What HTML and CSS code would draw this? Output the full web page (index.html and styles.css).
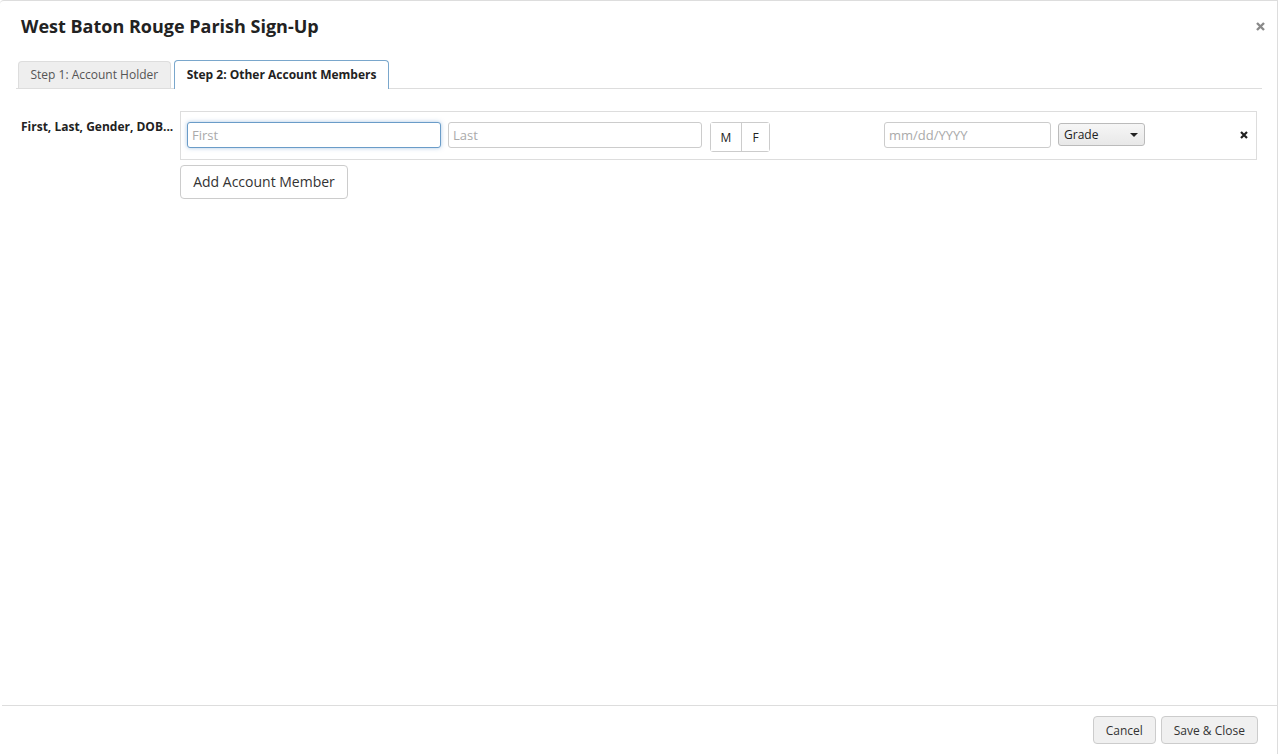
FILE: index.html
```html
<!DOCTYPE html>
<html lang="en">
<head>
<meta charset="utf-8">
<title>West Baton Rouge Parish Sign-Up</title>
<link rel="stylesheet" href="styles.css">
</head>
<body>
<div class="modal">
  <div class="modal-header">
    <h1 class="title">West Baton Rouge Parish Sign-Up</h1>
    <button class="close" type="button" aria-label="Close">
      <svg width="9" height="9" viewBox="0 0 9 9"><path d="M1 1 L8 8 M8 1 L1 8" stroke="#8a8a8a" stroke-width="2.4" stroke-linecap="butt"/></svg>
    </button>
  </div>
  <div class="tabs">
    <div class="tab">Step 1: Account Holder</div>
    <div class="tab active">Step 2: Other Account Members</div>
  </div>
  <div class="modal-body">
    <div class="form-row">
      <div class="label">First, Last, Gender, DOB...</div>
      <div class="field">
        <div class="member">
          <input class="input first focused" type="text" placeholder="First">
          <input class="input last" type="text" placeholder="Last">
          <div class="gender">
            <button class="g-btn" type="button">M</button>
            <button class="g-btn" type="button">F</button>
          </div>
          <div class="spacer"></div>
          <input class="input dob" type="text" placeholder="mm/dd/YYYY">
          <div class="select">Grade<span class="caret"></span></div>
          <div class="fill"></div>
          <button class="remove" type="button" aria-label="Remove">
            <svg width="8" height="8" viewBox="0 0 8 8"><path d="M1 1 L7 7 M7 1 L1 7" stroke="#222" stroke-width="2.2"/></svg>
          </button>
        </div>
        <button class="add-btn" type="button">Add Account Member</button>
      </div>
    </div>
  </div>
  <div class="modal-footer">
    <button class="btn" type="button">Cancel</button>
    <button class="btn" type="button">Save &amp; Close</button>
  </div>
</div>
</body>
</html>
```
FILE: styles.css
```css
* { box-sizing: border-box; }
html, body { margin: 0; padding: 0; background: #fff; }
body { font-family: "Open Sans", "Liberation Sans", sans-serif; color: #333; }

.modal {
  width: 1278px;
  height: 754px;
  border-top: 1px solid #ddd;
  border-right: 1px solid #ddd;
  border-top-left-radius: 4px;
  display: flex;
  flex-direction: column;
}

.modal-header {
  display: flex;
  justify-content: space-between;
  align-items: flex-start;
  padding: 13px 12px 0 21px;
  height: 59px;
}
.title {
  margin: 0;
  font-size: 18px;
  line-height: 24px;
  font-weight: 700;
  color: #222;
}
.close {
  border: 0;
  background: none;
  padding: 0;
  margin-top: 8px;
  width: 9px;
  height: 9px;
  display: flex;
  cursor: pointer;
}

.tabs {
  display: flex;
  align-items: flex-end;
  gap: 3px;
  margin: 0 15px 0 16px;
  padding-left: 2px;
  border-bottom: 1px solid #ddd;
  height: 29px;
}
.tab {
  height: 27px;
  padding: 0 11.5px;
  font-size: 12px;
  line-height: 26px;
  color: #555;
  background: #eee;
  border: 1px solid #ddd;
  border-bottom: 0;
  border-radius: 4px 4px 0 0;
}
.tab.active {
  height: 29px;
  margin-bottom: -1px;
  line-height: 27px;
  color: #222;
  font-weight: 700;
  background: #fff;
  border-color: #7aa7cc;
  padding: 0 12px;
}

.modal-body { flex: 1; padding: 22px 20px 0 21px; }
.form-row { display: flex; }
.label {
  width: 159px;
  flex: none;
  padding-top: 8px;
  font-size: 12px;
  line-height: 16px;
  font-weight: 700;
  color: #222;
}
.field { flex: 1; }
.member {
  display: flex;
  align-items: flex-start;
  height: 49px;
  border: 1px solid #ddd;
  padding: 10px 8px 0 6px;
}
.input {
  height: 26px;
  border: 1px solid #ccc;
  border-radius: 3px;
  padding: 0 4px;
  font-family: inherit;
  font-size: 13px;
  color: #333;
  outline: none;
}
.input::placeholder { color: #aaa; }
.first { width: 254px; }
.first.focused {
  border-color: #6a9cc8;
  box-shadow: 0 0 4px rgba(102, 153, 204, 0.55);
}
.last { width: 254px; margin-left: 7px; }
.gender {
  display: flex;
  margin-left: 8px;
  border: 1px solid #ccc;
  border-radius: 3px;
  height: 30px;
}
.g-btn {
  border: 0;
  background: #fff;
  font-family: inherit;
  font-size: 12px;
  color: #222;
  padding: 0;
  width: 30px;
  height: 28px;
}
.g-btn + .g-btn { border-left: 1px solid #ccc; width: 28px; }
.spacer { width: 114px; flex: none; }
.dob { width: 167px; }
.select {
  position: relative;
  width: 87px;
  height: 23px;
  margin-left: 7px;
  margin-top: 1px;
  border: 1px solid #bbb;
  border-radius: 3px;
  background: linear-gradient(#f6f6f6, #e8e8e8);
  font-size: 12px;
  line-height: 21px;
  padding-left: 5px;
  color: #222;
}
.caret {
  position: absolute;
  right: 6px;
  top: 9px;
  width: 0;
  height: 0;
  border-left: 4px solid transparent;
  border-right: 4px solid transparent;
  border-top: 4px solid #222;
}
.fill { flex: 1; }
.remove {
  border: 0;
  background: none;
  padding: 0;
  margin-top: 9px;
  width: 8px;
  height: 8px;
  display: flex;
}
.add-btn {
  margin-top: 5px;
  height: 34px;
  width: 168px;
  border: 1px solid #ccc;
  border-radius: 4px;
  background: #fff;
  font-family: inherit;
  font-size: 14px;
  line-height: 30px;
  color: #333;
  padding: 0 0 1px;
}

.modal-footer {
  margin-left: 2px;
  border-top: 1px solid #ddd;
  height: 49px;
  display: flex;
  justify-content: flex-end;
  gap: 5px;
  padding: 10px 19px 0 0;
}
.btn {
  height: 28px;
  padding: 0 12px;
  border: 1px solid #ccc;
  border-radius: 4px;
  background: #f0f0f0;
  font-family: inherit;
  font-size: 12px;
  color: #333;
}
```
